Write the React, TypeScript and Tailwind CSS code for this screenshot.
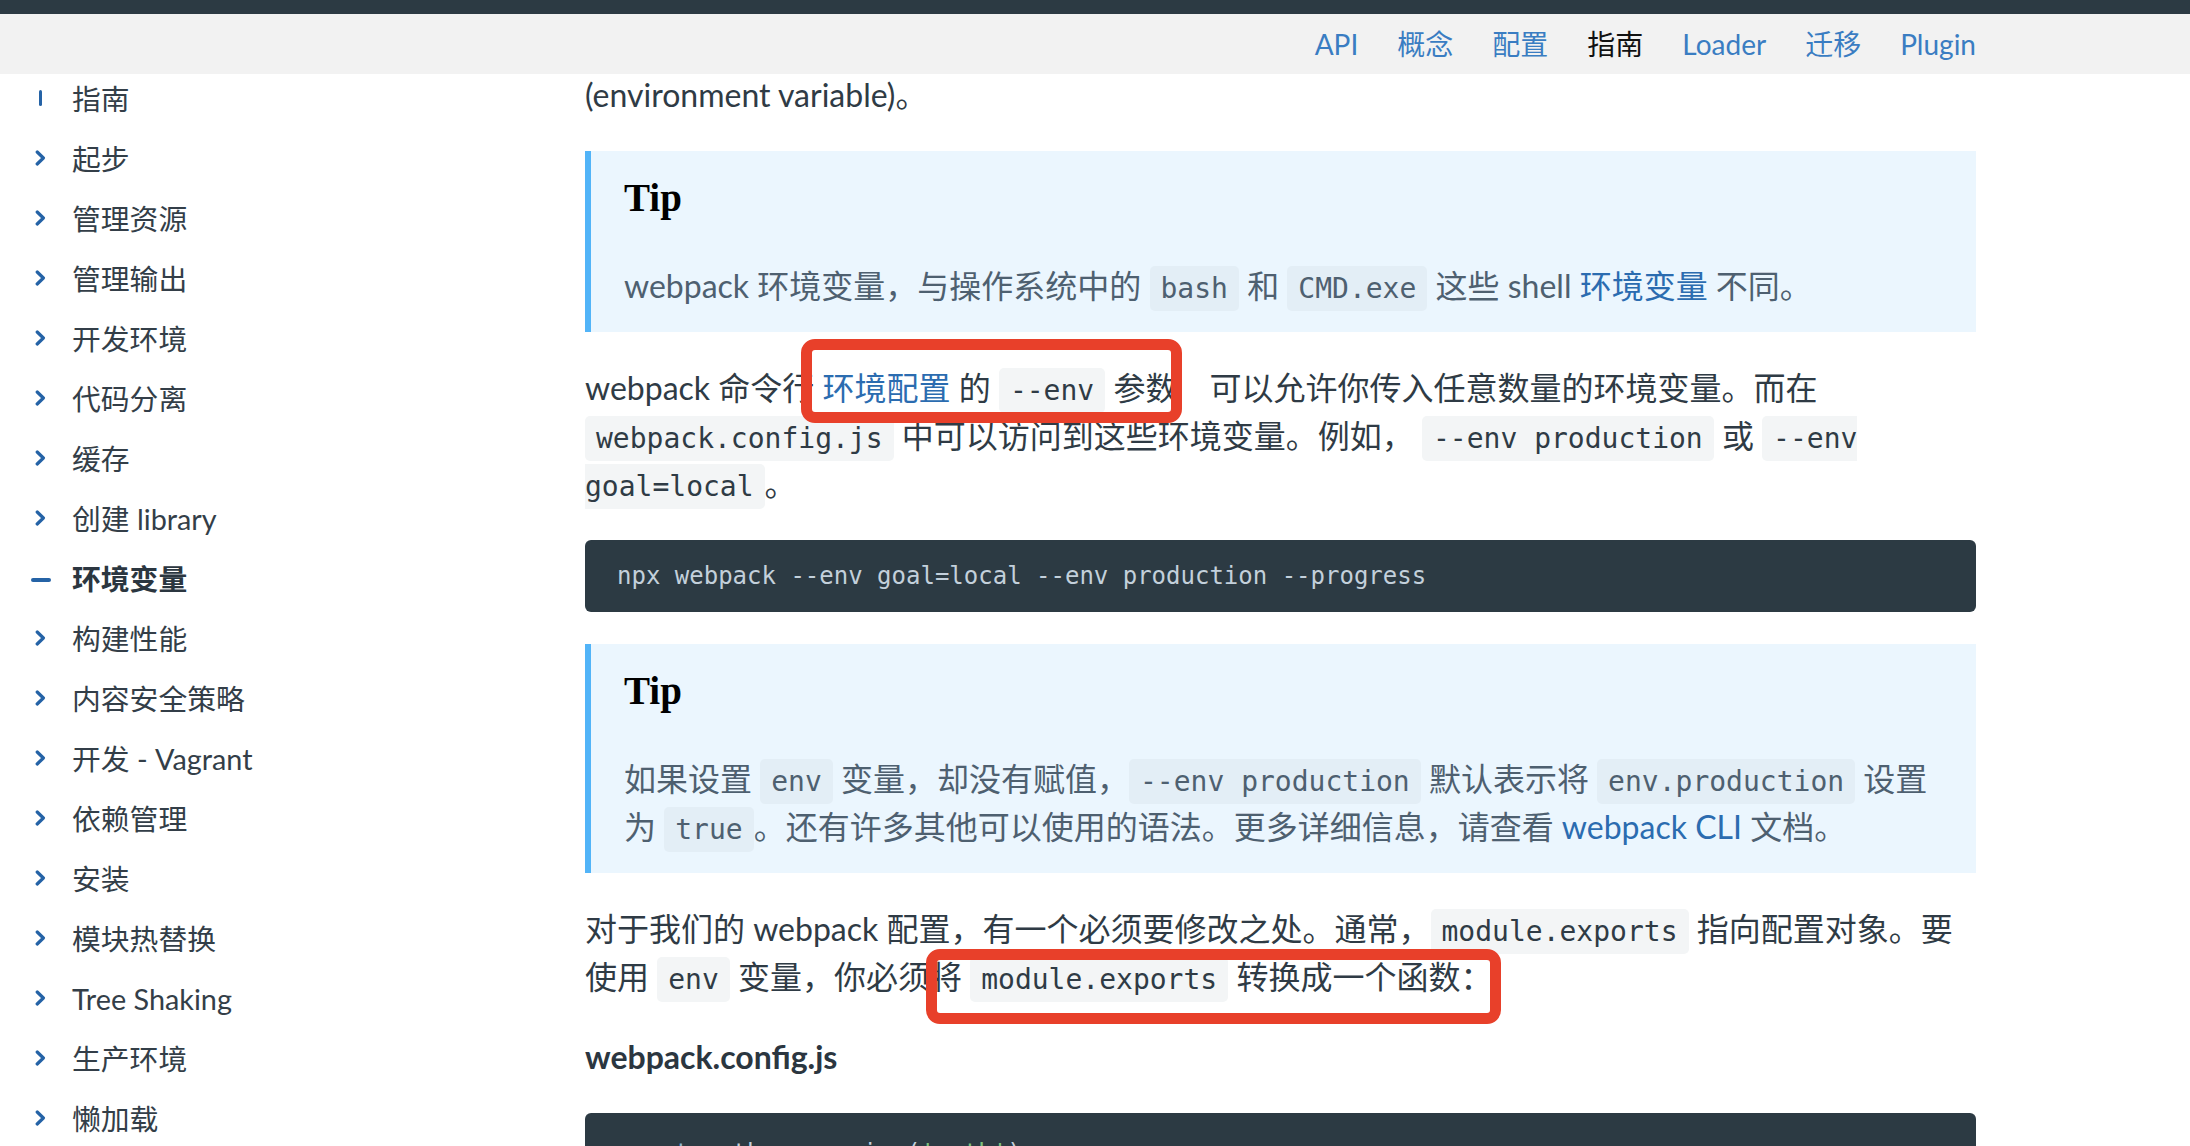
import React from 'react';

type Mark = 'open' | 'active' | 'closed';

const sidebarItems: { label: string; mark?: Mark }[] = [
  { label: '指南', mark: 'open' },
  { label: '起步' },
  { label: '管理资源' },
  { label: '管理输出' },
  { label: '开发环境' },
  { label: '代码分离' },
  { label: '缓存' },
  { label: '创建 library' },
  { label: '环境变量', mark: 'active' },
  { label: '构建性能' },
  { label: '内容安全策略' },
  { label: '开发 - Vagrant' },
  { label: '依赖管理' },
  { label: '安装' },
  { label: '模块热替换' },
  { label: 'Tree Shaking' },
  { label: '生产环境' },
  { label: '懒加载' },
];

const navLinks = ['API', '概念', '配置', '指南', 'Loader', '迁移', 'Plugin'];

const SidebarMark = ({ mark }: { mark?: Mark }) => {
  if (mark === 'open') {
    return <div className="w-[3.5px] h-[16px] rounded-full bg-[#2563a6] -mt-[4px]" />;
  }
  if (mark === 'active') {
    return <div className="w-[20px] h-[3.5px] rounded-full bg-[#2563a6]" />;
  }
  return (
    <svg width="11" height="16" viewBox="0 0 11 16" className="-mt-[4px] text-[#2563a6]">
      <polyline
        points="2.2,2 8.4,8 2.2,14"
        fill="none"
        stroke="currentColor"
        strokeWidth="3.2"
        strokeLinecap="round"
        strokeLinejoin="round"
      />
    </svg>
  );
};

const Code = ({ children, tip }: { children: React.ReactNode; tip?: boolean }) => (
  <code
    className={
      tip
        ? "font-['DejaVu_Sans_Mono',monospace] text-[28px] leading-none px-[11px] py-[6px] rounded-[5px] bg-[#e3eef6] text-[#4e6070]"
        : "font-['DejaVu_Sans_Mono',monospace] text-[28px] leading-none px-[11px] py-[6px] rounded-[5px] bg-[#f3f5f6] text-[#2f3b45]"
    }
  >
    {children}
  </code>
);

const Link = ({ children }: { children: React.ReactNode }) => (
  <a className="text-[#2b6cb0] cursor-pointer">{children}</a>
);

const Tip = ({ children }: { children: React.ReactNode }) => (
  <div className="bg-[#ebf6fe] border-l-[6px] border-[#52b4f8] pl-[33px] pr-[33px] pt-[23px] pb-[22px]">
    <h6 className="font-['Liberation_Serif',serif] font-bold text-[39px] leading-[48px] text-black mb-[40px]">
      Tip
    </h6>
    <p className="text-[#4e6070] leading-[48px]">{children}</p>
  </div>
);

const App = () => {
  return (
    <div className="relative w-full h-[1146px] overflow-hidden bg-white font-['Lato','Noto_Sans_CJK_SC',sans-serif] text-[32px] text-[#2f3b45]">
      <div className="h-[14px] bg-[#2c3a43]" />
      <nav className="h-[60px] bg-[#f2f2f2] flex items-center justify-end pr-[214px] gap-[39px] text-[28px]">
        {navLinks.map((link) => (
          <a
            key={link}
            className={link === '指南' ? 'text-[#111111] cursor-pointer' : 'text-[#3a7dc2] cursor-pointer'}
          >
            {link}
          </a>
        ))}
      </nav>

      <div className="flex">
        <aside className="w-[585px] shrink-0 -mt-[4px]">
          {sidebarItems.map((item) => (
            <div key={item.label} className="h-[60px] flex items-center pl-[30px]">
              <div className="w-[21px] flex justify-center">
                <SidebarMark mark={item.mark} />
              </div>
              <span
                className={
                  item.mark === 'active'
                    ? 'ml-[21px] text-[28.8px] font-bold text-[#2b3640]'
                    : 'ml-[21px] text-[28.8px] text-[#333e48]'
                }
              >
                {item.label}
              </span>
            </div>
          ))}
        </aside>

        <main className="w-[1391px] shrink-0 -mt-[3px] flex flex-col gap-[32px] leading-[48px]">
          <p>(environment variable)。</p>

          <Tip>
            webpack 环境变量，与操作系统中的 <Code tip>bash</Code> 和 <Code tip>CMD.exe</Code> 这些 shell{' '}
            <Link>环境变量</Link> 不同。
          </Tip>

          <p>
            webpack 命令行 <Link>环境配置</Link> 的 <Code>--env</Code> 参数 <span className="inline-block w-[24px]" />
            可以允许你传入任意数量的环境变量。而在 <Code>webpack.config.js</Code> 中可以访问到这些环境变量。例如，{' '}
            <Code>--env production</Code> 或 <Code>--env goal=local</Code>。
          </p>

          <pre className="bg-[#2c3a43] rounded-[6px] px-[32px] py-[18px] font-['DejaVu_Sans_Mono',monospace] text-[24px] leading-[36px] text-[#c3d0db]">
            npx webpack --env goal=local --env production --progress
          </pre>

          <Tip>
            如果设置 <Code tip>env</Code> 变量，却没有赋值，<Code tip>--env production</Code> 默认表示将{' '}
            <Code tip>env.production</Code> 设置为 <Code tip>true</Code>。还有许多其他可以使用的语法。更多详细信息，请查看{' '}
            <Link>webpack CLI</Link> 文档。
          </Tip>

          <p>
            对于我们的 webpack 配置，有一个必须要修改之处。通常，<Code>module.exports</Code> 指向配置对象。要使用{' '}
            <Code>env</Code> 变量，你必须将 <Code>module.exports</Code> 转换成一个函数：
          </p>

          <h3 className="font-bold text-[#2b3640]">webpack.config.js</h3>

          <pre className="bg-[#2c3a43] rounded-[6px] px-[32px] pt-[22px] pb-[18px] font-['DejaVu_Sans_Mono',monospace] text-[24px] leading-[36px] text-[#c3d0db]">
            <span className="text-[#8fb4d0]">const</span> path = <span className="text-[#c3d0db]">require</span>(
            <span className="text-[#7ec27e]">'path'</span>);
          </pre>
        </main>
      </div>

      {/* annotation boxes drawn over the page */}
      <div className="absolute left-[801px] top-[339px] w-[381px] h-[84px] border-[11px] border-[#e8402a] rounded-[14px] pointer-events-none" />
      <div className="absolute left-[926px] top-[949px] w-[575px] h-[75px] border-[11px] border-[#e8402a] rounded-[14px] pointer-events-none" />
    </div>
  );
};

export default App;
